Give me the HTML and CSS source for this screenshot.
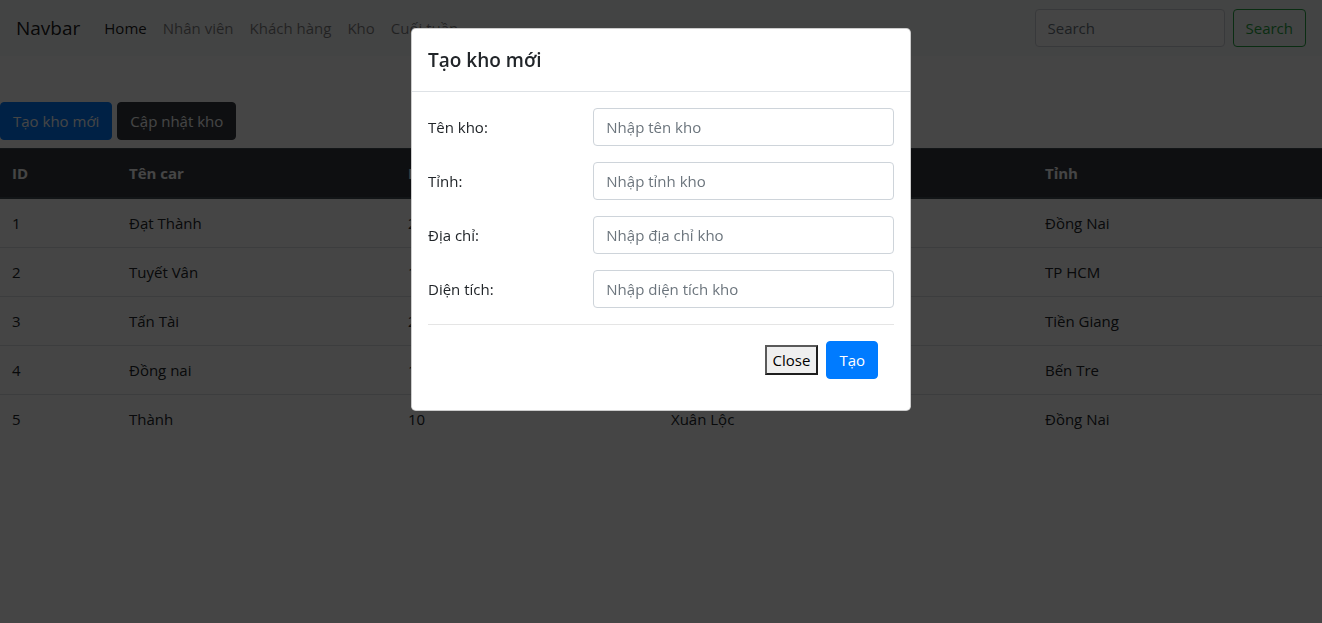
FILE: index.html
```html
<!DOCTYPE html>
<html lang="vi">
<head>
<meta charset="utf-8">
<title>Kho</title>
<link rel="stylesheet" href="styles.css">
</head>
<body>
<nav class="navbar">
  <a class="brand" href="#">Navbar</a>
  <ul class="nav">
    <li><a class="nav-link active" href="#">Home</a></li>
    <li><a class="nav-link" href="#">Nhân viên</a></li>
    <li><a class="nav-link" href="#">Khách hàng</a></li>
    <li><a class="nav-link" href="#">Kho</a></li>
    <li><a class="nav-link" href="#">Cuối tuần</a></li>
  </ul>
  <form class="search">
    <input class="form-control search-input" type="search" placeholder="Search">
    <button class="btn btn-outline-success" type="button">Search</button>
  </form>
</nav>

<main class="content">
  <div class="actions">
    <button class="btn btn-primary" type="button">Tạo kho mới</button>
    <button class="btn btn-dark" type="button">Cập nhật kho</button>
  </div>
  <table class="table">
    <thead>
      <tr>
        <th class="c-id">ID</th>
        <th class="c-name">Tên car</th>
        <th class="c-area">Loại</th>
        <th class="c-addr">Địa chỉ</th>
        <th class="c-prov">Tỉnh</th>
      </tr>
    </thead>
    <tbody>
      <tr><td>1</td><td>Đạt Thành</td><td>20</td><td>Biên Hòa</td><td>Đồng Nai</td></tr>
      <tr><td>2</td><td>Tuyết Vân</td><td>15</td><td>Quận 1</td><td>TP HCM</td></tr>
      <tr><td>3</td><td>Tấn Tài</td><td>25</td><td>Mỹ Tho</td><td>Tiền Giang</td></tr>
      <tr><td>4</td><td>Đồng nai</td><td>12</td><td>Châu Thành</td><td>Bến Tre</td></tr>
      <tr><td>5</td><td>Thành</td><td>10</td><td>Xuân Lộc</td><td>Đồng Nai</td></tr>
    </tbody>
  </table>
</main>

<div class="backdrop"></div>
<div class="modal">
  <div class="modal-dialog">
    <div class="modal-header">
      <h5 class="modal-title">Tạo kho mới</h5>
    </div>
    <div class="modal-body">
      <form class="kho-form">
        <div class="form-group">
          <label class="col-label" for="ten">Tên kho:</label>
          <input class="form-control" id="ten" type="text" placeholder="Nhập tên kho">
        </div>
        <div class="form-group">
          <label class="col-label" for="tinh">Tỉnh:</label>
          <input class="form-control" id="tinh" type="text" placeholder="Nhập tỉnh kho">
        </div>
        <div class="form-group">
          <label class="col-label" for="diachi">Địa chỉ:</label>
          <input class="form-control" id="diachi" type="text" placeholder="Nhập địa chỉ kho">
        </div>
        <div class="form-group">
          <label class="col-label" for="dientich">Diện tích:</label>
          <input class="form-control" id="dientich" type="text" placeholder="Nhập diện tích kho">
        </div>
        <hr class="divider">
        <div class="modal-actions">
          <button class="plain-btn" type="button">Close</button>
          <button class="btn btn-primary" type="button">Tạo</button>
        </div>
      </form>
    </div>
  </div>
</div>
</body>
</html>
```

FILE: styles.css
```css
* { box-sizing: border-box; }

html, body {
  margin: 0;
  height: 100%;
}

body {
  font-family: "Open Sans", "Noto Sans", "Liberation Sans", sans-serif;
  font-size: 15px;
  line-height: 24px;
  color: #212529;
  background: #fff;
}

/* Navbar */
.navbar {
  display: flex;
  align-items: center;
  height: 56px;
  padding: 8px 16px;
  background: #f8f9fa;
}
.brand {
  font-size: 19px;
  line-height: 30px;
  color: rgba(0,0,0,.9);
  text-decoration: none;
  margin-right: 16px;
}
.nav {
  display: flex;
  list-style: none;
  margin: 0;
  padding: 0;
  flex: 1;
}
.nav-link {
  display: block;
  padding: 8px;
  color: rgba(0,0,0,.5);
  text-decoration: none;
}
.nav-link.active { color: rgba(0,0,0,.9); }

.search {
  display: flex;
  align-items: center;
  gap: 8px;
}

/* Form controls & buttons */
.form-control {
  display: block;
  width: 100%;
  height: 38px;
  padding: 6px 12px;
  font: inherit;
  line-height: 24px;
  color: #495057;
  background: #fff;
  border: 1px solid #ced4da;
  border-radius: 4px;
}
.form-control::placeholder { color: #6c757d; opacity: 1; }
.search-input { width: 190px; }

.btn {
  display: inline-block;
  font: inherit;
  line-height: 24px;
  padding: 6px 12px;
  border: 1px solid transparent;
  border-radius: 4px;
  cursor: pointer;
}
.btn-primary { background: #007bff; border-color: #007bff; color: #fff; }
.btn-dark { background: #343a40; border-color: #343a40; color: #fff; }
.btn-outline-success { background: transparent; border-color: #28a745; color: #28a745; }

/* Page content */
.content { padding-top: 46px; }
.actions {
  display: flex;
  gap: 5px;
}

.table {
  width: 100%;
  margin-top: 8px;
  border-collapse: collapse;
  color: #212529;
}
.table th, .table td {
  padding: 12px;
  text-align: left;
  vertical-align: top;
  border-top: 1px solid #dee2e6;
}
.table thead th {
  vertical-align: bottom;
  background: #343a40;
  color: #fff;
  border-color: #454d55;
  border-bottom: 2px solid #454d55;
  font-weight: 700;
}
.c-id { width: 117px; }
.c-name { width: 279px; }
.c-area { width: 263px; }
.c-addr { width: 374px; }
.c-prov { width: 289px; }

/* Modal */
.backdrop {
  position: fixed;
  inset: 0;
  background: rgba(0,0,0,.73);
}
.modal {
  position: fixed;
  inset: 0;
}
.modal-dialog {
  width: 500px;
  margin: 28px auto;
  background: #fff;
  border: 1px solid rgba(0,0,0,.2);
  border-radius: 4.8px;
}
.modal-header {
  padding: 16px;
  border-bottom: 1px solid #dee2e6;
}
.modal-title {
  margin: 0;
  font-size: 19px;
  line-height: 30px;
  font-weight: 600;
}
.modal-body { padding: 16px; }

.form-group {
  display: grid;
  grid-template-columns: 165.33px 1fr;
  margin-bottom: 16px;
}
.col-label {
  padding-top: 7px;
  padding-bottom: 7px;
}

.divider {
  margin: 16px 0;
  border: 0;
  border-top: 1px solid rgba(0,0,0,.1);
}

.modal-actions {
  display: flex;
  justify-content: flex-end;
  align-items: center;
  gap: 8px;
  padding: 0 16px 15px 0;
}
.plain-btn {
  font: inherit;
  line-height: 22px;
  padding: 2px 6px;
  color: #000;
  background: #efefef;
  border: 2px solid;
  border-color: #5a5a5a #1e1e1e #1e1e1e #5a5a5a;
}
```
